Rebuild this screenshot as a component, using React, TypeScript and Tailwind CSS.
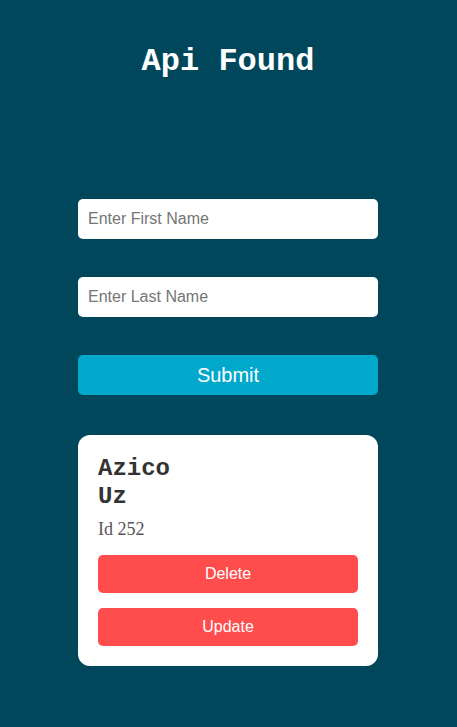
export default function App() {
    return (
        <div className="min-h-[727px] bg-[#00475c] flex flex-col items-center pr-[1px] pt-[42px] pb-[60px]">
            <h1 className="text-[32px] leading-[40px] font-bold text-white font-['Liberation_Mono',monospace]">
                Api Found
            </h1>

            <form className="w-[300px] mt-[117px] flex flex-col gap-[38px]" onSubmit={(e) => e.preventDefault()}>
                <input
                    type="text"
                    placeholder="Enter First Name"
                    className="h-[40px] w-full rounded-[5px] bg-white px-[10px] text-[16px] font-['Liberation_Sans',sans-serif] text-zinc-800 placeholder:text-[#757575] outline-none"
                />
                <input
                    type="text"
                    placeholder="Enter Last Name"
                    className="h-[40px] w-full rounded-[5px] bg-white px-[10px] text-[16px] font-['Liberation_Sans',sans-serif] text-zinc-800 placeholder:text-[#757575] outline-none"
                />
                <button
                    type="submit"
                    className="h-[40px] w-full rounded-[5px] bg-[#00a8cc] text-white text-[20px] font-['Liberation_Sans',sans-serif]"
                >
                    Submit
                </button>
            </form>

            {/* Card */}
            <div className="w-[300px] mt-[40px] bg-white rounded-[12px] p-[20px]">
                <h2 className="w-[90px] text-[24px] leading-[28px] font-bold text-[#333] font-['Liberation_Mono',monospace]">
                    Azico Uz
                </h2>
                <p className="mt-[7px] text-[18px] leading-[22px] text-[#555] font-['Liberation_Serif',serif]">
                    Id 252
                </p>
                <div className="mt-[15px] flex flex-col gap-[15px]">
                    <button className="h-[38px] w-full rounded-[5px] bg-[#ff4c4c] text-white text-[16px] font-['Liberation_Sans',sans-serif]">
                        Delete
                    </button>
                    <button className="h-[38px] w-full rounded-[5px] bg-[#ff4c4c] text-white text-[16px] font-['Liberation_Sans',sans-serif]">
                        Update
                    </button>
                </div>
            </div>
        </div>
    );
}
